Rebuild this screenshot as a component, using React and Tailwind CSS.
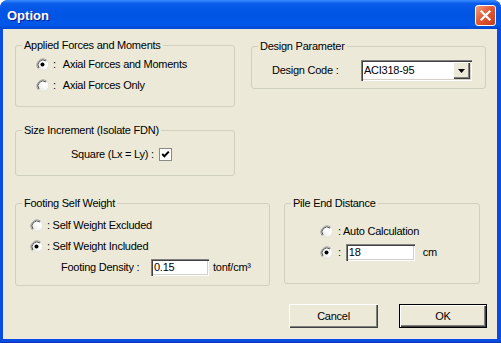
import React from "react";

const font = "font-['Liberation_Sans',Arial,sans-serif]";

function Radio({ checked }) {
  return (
    <svg width="13" height="13" viewBox="0 0 13 13" className="shrink-0">
      <defs>
        <linearGradient id="rfill" x1="0" y1="1" x2="1" y2="0">
          <stop offset="0" stopColor="#DCDCD4" />
          <stop offset="0.6" stopColor="#FFFFFF" />
        </linearGradient>
      </defs>
      <circle cx="6.5" cy="6.5" r="6" fill="url(#rfill)" stroke="#E4E2D8" strokeWidth="1" />
      <path d="M2.3 10.7 A6 6 0 0 1 10.7 2.3" fill="none" stroke="#9A9A96" strokeWidth="1" />
      <path d="M3.0 10.0 A5 5 0 0 1 10.0 3.0" fill="none" stroke="#505050" strokeWidth="1" />
      {checked && <circle cx="6.5" cy="6.5" r="2" fill="#000" />}
    </svg>
  );
}

function Group({ title, className, children }) {
  return (
    <fieldset className={`border border-[#D0D0BF] rounded-[3px] ${className}`}>
      <legend className="ml-[6px] px-[2px] leading-[13px]">{title}</legend>
      {children}
    </fieldset>
  );
}

const sunken =
  "bg-white shadow-[inset_1px_1px_0_#808080,inset_2px_2px_0_#404040,inset_-1px_-1px_0_#ffffff,inset_-2px_-2px_0_#D4D0C8]";

const raised =
  "bg-[#ECE9D8] shadow-[inset_1px_1px_0_#ffffff,inset_-1px_-1px_0_#404040,inset_-2px_-2px_0_#808080]";

export default function App() {
  return (
    <div className={`w-[501px] h-[343px] bg-white text-[11px] tracking-[-0.25px] text-black ${font}`}>
      <div className="flex flex-col w-full h-full rounded-t-[8px] bg-[#0A4BE2] border-b-[1px] border-[#0831B8] overflow-hidden">
        {/* Title bar */}
        <div className="h-[29px] shrink-0 flex items-center justify-between pl-[7px] pr-[5px] bg-[linear-gradient(180deg,#3A8DFF_0%,#0A5CEB_12%,#0054E3_50%,#0058EA_85%,#0047D2_100%)]">
          <span className="pt-[3px] text-white font-bold text-[13px] tracking-normal [text-shadow:1px_1px_0_#0A1E8C]">
            Option
          </span>
          <div className="mt-[2px] w-[21px] h-[21px] rounded-[3px] border border-white flex items-center justify-center bg-[linear-gradient(135deg,#F4A07E_0%,#E35B35_45%,#C43E1A_100%)]">
            <svg width="13" height="13" viewBox="0 0 13 13">
              <path d="M2.5 2.5 L10.5 10.5 M10.5 2.5 L2.5 10.5" stroke="#fff" strokeWidth="2.2" strokeLinecap="square" />
            </svg>
          </div>
        </div>

        {/* Body */}
        <div className="flex-1 ml-[3px] mr-[4px] mb-[3px] bg-[#ECE9D8] pt-[10px] pl-[12px]">
          <div className="flex items-start">
            <Group title="Applied Forces and Moments" className="w-[220px] h-[68px]">
              <div className="pt-[2px] pl-[20px]">
                <div className="h-[21px] flex items-center">
                  <Radio checked />
                  <span className="ml-[4px]">:</span>
                  <span className="ml-[7px]">Axial Forces and Moments</span>
                </div>
                <div className="h-[21px] flex items-center">
                  <Radio />
                  <span className="ml-[4px]">:</span>
                  <span className="ml-[7px]">Axial Forces Only</span>
                </div>
              </div>
            </Group>

            <Group title="Design Parameter" className="ml-[16px] mt-[1px] w-[235px] h-[49px]">
              <div className="pt-[7px] pl-[20px] flex items-center">
                <span className="w-[89px]">Design Code :</span>
                <div className={`w-[111px] h-[21px] flex items-center justify-between pl-[3px] pr-[2px] ${sunken}`}>
                  <span>ACI318-95</span>
                  <div className={`w-[17px] h-[17px] flex items-center justify-center ${raised}`}>
                    <svg width="7" height="4" viewBox="0 0 7 4">
                      <path d="M0 0 H7 L3.5 4 Z" fill="#000" />
                    </svg>
                  </div>
                </div>
              </div>
            </Group>
          </div>

          <Group title="Size Increment (Isolate FDN)" className="mt-[17px] w-[220px] h-[52px]">
            <div className="mt-[11px] pl-[55px] flex items-center h-[13px]">
              <span>Square (Lx = Ly) :</span>
              <div className="ml-[5px] w-[13px] h-[13px] bg-white border border-[#8A8A86] flex items-center justify-center">
                <svg width="9" height="9" viewBox="0 0 9 9">
                  <path d="M1.2 4 L3.4 6.3 L7.8 1.6" fill="none" stroke="#000" strokeWidth="2" />
                </svg>
              </div>
            </div>
          </Group>

          <div className="flex items-start mt-[21px]">
            <Group title="Footing Self Weight" className="w-[255px] h-[89px]">
              <div className="pt-[5px] pl-[14px]">
                <div className="h-[21px] flex items-center">
                  <Radio />
                  <span className="ml-[4px]">: Self Weight Excluded</span>
                </div>
                <div className="h-[21px] flex items-center">
                  <Radio checked />
                  <span className="ml-[4px]">: Self Weight Included</span>
                </div>
                <div className="h-[21px] flex items-center pl-[31px]">
                  <span className="w-[90px]">Footing Density :</span>
                  <div className={`w-[58px] h-[17px] flex items-center pl-[3px] ${sunken}`}>0.15</div>
                  <span className="ml-[4px]">tonf/cm³</span>
                </div>
              </div>
            </Group>

            <Group title="Pile End Distance" className="ml-[14px] w-[196px] h-[87px]">
              <div className="pt-[11px] pl-[35px]">
                <div className="h-[21px] flex items-center">
                  <Radio />
                  <span className="ml-[5px]">: Auto Calculation</span>
                </div>
                <div className="h-[21px] flex items-center">
                  <Radio checked />
                  <span className="ml-[5px]">:</span>
                  <div className={`ml-[5px] w-[69px] h-[17px] flex items-center pl-[3px] ${sunken}`}>18</div>
                  <span className="ml-[8px]">cm</span>
                </div>
              </div>
            </Group>
          </div>

          <div className="flex justify-end gap-[21px] pr-[10px] mt-[18px]">
            <button className={`w-[89px] h-[24px] ${raised}`}>Cancel</button>
            <button className={`w-[88px] h-[24px] border border-black ${raised}`}>OK</button>
          </div>
        </div>
      </div>
    </div>
  );
}
